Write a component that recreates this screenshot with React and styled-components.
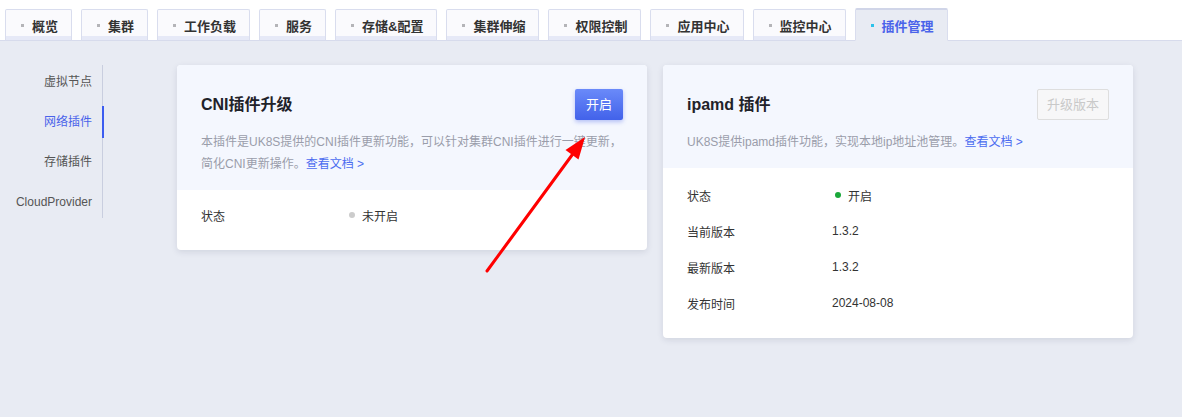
import React from "react";
import styled, { createGlobalStyle } from "styled-components";

const GlobalStyle = createGlobalStyle`
  html, body {
    margin: 0;
    padding: 0;
    background: #ffffff;
    font-family: "Liberation Sans", "Noto Sans CJK SC", Arial, sans-serif;
    color: #333;
  }
  #root {
    min-height: 417px;
  }
`;

const Page = styled.div`
  position: relative;
  width: 1182px;
  height: 417px;
  display: flex;
  flex-direction: column;
`;

const TabBar = styled.div`
  display: flex;
  align-items: flex-end;
  gap: 9px;
  height: 41px;
  padding-left: 5px;
  border-bottom: 1px solid #d7dbec;
  box-sizing: border-box;
`;

const Tab = styled.div`
  display: flex;
  align-items: center;
  height: ${(p) => (p.active ? "33px" : "32px")};
  margin-bottom: -1px;
  padding: 0 13px 0 15px;
  box-sizing: border-box;
  border: 1px solid #d9ddee;
  border-top: ${(p) => (p.active ? "2px solid #d0d5e8" : "1px solid #d9ddee")};
  border-bottom: ${(p) => (p.active ? "1px solid #e8ebf3" : "1px solid #d7dbec")};
  border-radius: 2px 2px 0 0;
  background: ${(p) => (p.active ? "#e8ebf3" : "#fafafd")};
  box-shadow: ${(p) => (p.active ? "none" : "inset 0 -4px 0 #e6e9f7")};
  font-size: 13px;
  font-weight: bold;
  color: ${(p) => (p.active ? "#4a63ea" : "#333")};
  white-space: nowrap;
`;

const TabDot = styled.span`
  width: 3px;
  height: 3px;
  margin-right: 8px;
  background: ${(p) => (p.active ? "#2bc2ea" : "#b4b4b8")};
`;

const Main = styled.div`
  flex: 1;
  display: flex;
  align-items: flex-start;
  background: #e8ebf3;
  padding-top: 24px;
`;

const SideNav = styled.div`
  width: 102px;
  display: flex;
  flex-direction: column;
  gap: 8px;
  padding-top: 1px;
  border-right: 1px solid #c9cedf;
`;

const SideItem = styled.div`
  position: relative;
  height: 32px;
  line-height: 32px;
  text-align: right;
  padding-right: 10px;
  font-size: 12px;
  color: ${(p) => (p.active ? "#4a63ea" : "#555")};

  &::after {
    content: "";
    display: ${(p) => (p.active ? "block" : "none")};
    position: absolute;
    right: -2px;
    top: 0;
    width: 2px;
    height: 32px;
    background: #3c5cf0;
  }
`;

const Cards = styled.div`
  display: flex;
  align-items: flex-start;
  gap: 16px;
  margin-left: 74px;
`;

const Card = styled.div`
  width: 470px;
  background: #fff;
  border-radius: 4px;
  overflow: hidden;
  box-shadow: 0 2px 6px rgba(40, 50, 80, 0.12);
`;

const CardHead = styled.div`
  background: #f4f7fe;
  padding: 24px 24px 15px;
`;

const TitleRow = styled.div`
  display: flex;
  align-items: center;
  justify-content: space-between;
  height: 31px;
`;

const Title = styled.div`
  padding-bottom: 4px;
  font-size: 16px;
  font-weight: bold;
  color: #1f2229;
`;

const PrimaryButton = styled.div`
  width: 48px;
  height: 31px;
  line-height: 31px;
  text-align: center;
  border-radius: 2px;
  font-size: 13px;
  color: #fff;
  background: linear-gradient(#6a8af9, #4262ea);
  box-shadow: 0 2px 4px rgba(60, 90, 230, 0.35);
`;

const DisabledButton = styled.div`
  width: 72px;
  height: 31px;
  line-height: 29px;
  box-sizing: border-box;
  text-align: center;
  border: 1px solid #dedede;
  border-radius: 2px;
  font-size: 13px;
  color: #c9c9c9;
  background: #f7f7f8;
`;

const Desc = styled.p`
  margin: 11px 0 0;
  font-size: 12px;
  line-height: 22px;
  color: #9a9daa;
`;

const DocLink = styled.a`
  color: #4b6cf0;
  text-decoration: none;
`;

const CardBody = styled.div`
  padding: ${(p) => (p.tall ? "9px" : "7px")} 24px 17px;
`;

const InfoRow = styled.div`
  display: flex;
  align-items: center;
  height: 36px;
  font-size: 12px;
  color: #333;
`;

const Label = styled.div`
  width: 145px;
`;

const Value = styled.div`
  display: flex;
  align-items: center;
`;

const StatusDot = styled.span`
  width: 6px;
  height: 6px;
  border-radius: 50%;
  margin: 0 7px 0 3px;
  background: ${(p) => (p.on ? "#1aa83a" : "#cccccc")};
`;

const Arrow = styled.svg`
  position: absolute;
  left: 0;
  top: 0;
  pointer-events: none;
`;

const tabs = [
  "概览",
  "集群",
  "工作负载",
  "服务",
  "存储&配置",
  "集群伸缩",
  "权限控制",
  "应用中心",
  "监控中心",
  "插件管理",
];

const sideItems = ["虚拟节点", "网络插件", "存储插件", "CloudProvider"];

const ipamdRows = [
  ["当前版本", "1.3.2"],
  ["最新版本", "1.3.2"],
  ["发布时间", "2024-08-08"],
];

export default function App() {
  return (
    <Page>
      <GlobalStyle />
      <TabBar>
        {tabs.map((t) => (
          <Tab key={t} active={t === "插件管理"}>
            <TabDot active={t === "插件管理"} />
            {t}
          </Tab>
        ))}
      </TabBar>
      <Main>
        <SideNav>
          {sideItems.map((s) => (
            <SideItem key={s} active={s === "网络插件"}>
              {s}
            </SideItem>
          ))}
        </SideNav>
        <Cards>
          <Card>
            <CardHead>
              <TitleRow>
                <Title>CNI插件升级</Title>
                <PrimaryButton>开启</PrimaryButton>
              </TitleRow>
              <Desc>
                本插件是UK8S提供的CNI插件更新功能，可以针对集群CNI插件进行一键更新，
                <br />
                简化CNI更新操作。<DocLink href="#">查看文档 &gt;</DocLink>
              </Desc>
            </CardHead>
            <CardBody>
              <InfoRow>
                <Label>状态</Label>
                <Value>
                  <StatusDot />
                  未开启
                </Value>
              </InfoRow>
            </CardBody>
          </Card>
          <Card>
            <CardHead>
              <TitleRow>
                <Title>ipamd 插件</Title>
                <DisabledButton>升级版本</DisabledButton>
              </TitleRow>
              <Desc>
                UK8S提供ipamd插件功能，实现本地ip地址池管理。
                <DocLink href="#">查看文档 &gt;</DocLink>
              </Desc>
            </CardHead>
            <CardBody tall>
              <InfoRow>
                <Label>状态</Label>
                <Value>
                  <StatusDot on />
                  开启
                </Value>
              </InfoRow>
              {ipamdRows.map(([k, v]) => (
                <InfoRow key={k}>
                  <Label>{k}</Label>
                  <Value>{v}</Value>
                </InfoRow>
              ))}
            </CardBody>
          </Card>
        </Cards>
      </Main>
      <Arrow width="1182" height="417" viewBox="0 0 1182 417">
        <line x1="487" y1="271" x2="575" y2="151" stroke="#ff0000" strokeWidth="3" strokeLinecap="round" />
        <polygon points="585,137 578.5,159.5 565.5,150.1" fill="#ff0000" />
      </Arrow>
    </Page>
  );
}
